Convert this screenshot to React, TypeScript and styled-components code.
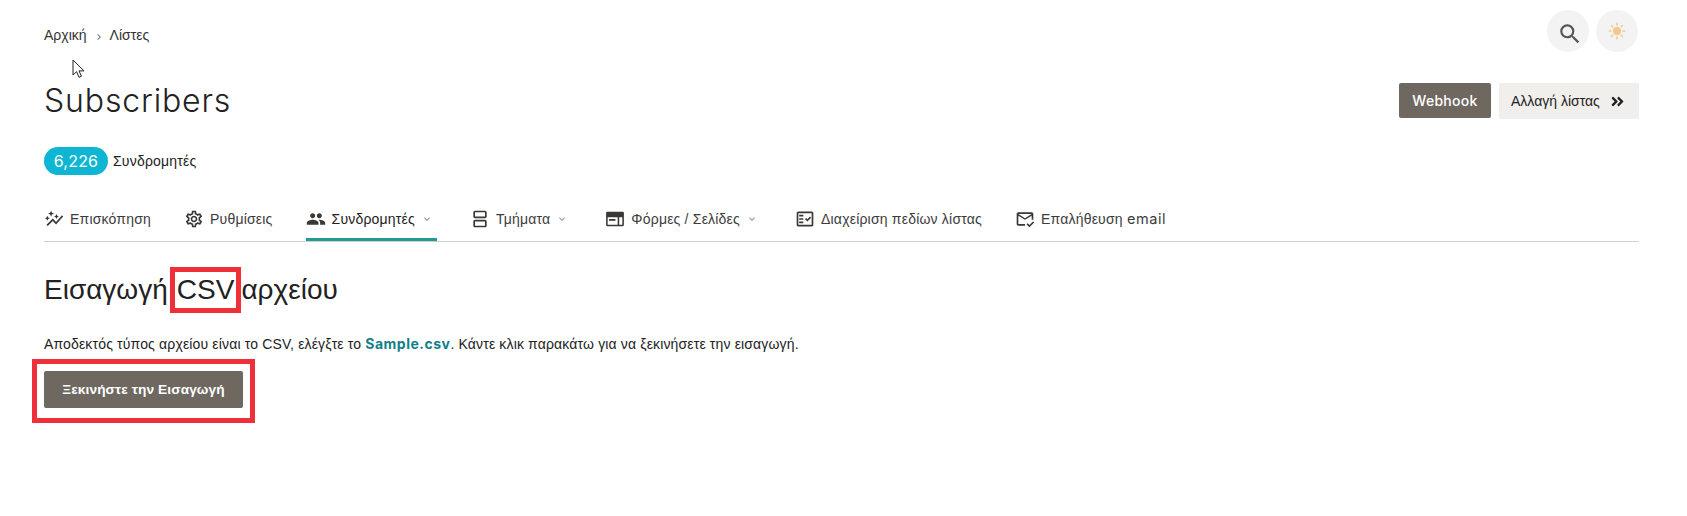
import React from "react";
import styled, { createGlobalStyle } from "styled-components";
import {
  MdOutlineAutoGraph,
  MdOutlineSettings,
  MdPeople,
  MdOutlineSplitscreen,
  MdOutlineFactCheck,
  MdOutlineMarkEmailRead,
  MdSearch,
  MdExpandMore,
  MdChevronRight,
} from "react-icons/md";
import { FaAngleDoubleRight } from "react-icons/fa";

const Global = createGlobalStyle`
  html, body { margin: 0; padding: 0; background: #fff; }
  body { font-family: "Liberation Sans", Arial, sans-serif; color: #222; }
`;

const Page = styled.div`
  position: relative;
  width: 1687px;
  height: 516px;
  box-sizing: border-box;
  padding: 10px 48px 0 44px;
  overflow: hidden;
`;

const TopRow = styled.div`
  display: flex;
  justify-content: space-between;
  align-items: center;
  height: 42px;
`;

const Crumbs = styled.nav`
  display: flex;
  align-items: center;
  font-size: 14px;
  color: #333;
  padding-top: 8px;
`;

const CrumbSep = styled.span`
  display: flex;
  align-items: center;
  margin: 3px 5px 0 6px;
  color: #777;
`;

const RoundGroup = styled.div`
  display: flex;
  gap: 7px;
  margin-right: 1px;
`;

const RoundButton = styled.button<{ $nudge?: boolean }>`
  width: 42px;
  height: 42px;
  border: 0;
  padding: ${(p) => (p.$nudge ? "5px 0 0 3px" : "0")};
  border-radius: 50%;
  background: #f3f3f3;
  color: #555;
  display: flex;
  align-items: center;
  justify-content: center;
`;

const TitleRow = styled.div`
  display: flex;
  justify-content: space-between;
  align-items: center;
  margin-top: 31px;
  height: 36px;
`;

const Title = styled.h1`
  margin: 0;
  font-family: "Inter", sans-serif;
  font-weight: 300;
  font-size: 32px;
  line-height: 36px;
  letter-spacing: 0.85px;
  color: #222;
`;

const Actions = styled.div`
  display: flex;
  gap: 8px;
`;

const DarkButton = styled.button`
  height: 35px;
  width: 92px;
  border: 0;
  border-radius: 2px;
  background: #6f6861;
  color: #fff;
  font-family: "Inter", sans-serif;
  font-weight: 500;
  font-size: 14px;
  letter-spacing: 0.3px;
  padding: 0;
`;

const LightButton = styled.button`
  height: 36px;
  width: 140px;
  border: 0;
  background: #f0efec;
  color: #222;
  font-family: "Liberation Sans", sans-serif;
  font-size: 14px;
  padding: 0 14px 0 12px;
  display: flex;
  align-items: center;
  justify-content: space-between;
`;

const CountRow = styled.div`
  display: flex;
  align-items: center;
  gap: 5px;
  margin-top: 28px;
  height: 28px;
  font-size: 14px;
  letter-spacing: 0.2px;
  color: #222;
`;

const Pill = styled.span`
  width: 64px;
  height: 28px;
  border-radius: 14px;
  background: #0fb6d3;
  color: #fff;
  display: flex;
  align-items: center;
  justify-content: center;
  font-family: "Inter", sans-serif;
  font-size: 16px;
`;

const Tabs = styled.div`
  display: flex;
  gap: 33px;
  margin-top: 21px;
  height: 45px;
  border-bottom: 1px solid #cfcfcf;
  box-sizing: content-box;
`;

const Tab = styled.div<{ $active?: boolean; $menu?: boolean }>`
  display: flex;
  align-items: center;
  gap: 6px;
  height: 45px;
  box-sizing: border-box;
  padding-top: 3px;
  padding-right: ${(p) => (p.$menu ? "4px" : "0")};
  border-bottom: 3px solid ${(p) => (p.$active ? "#1f9d94" : "transparent")};
  margin-bottom: -1px;
  font-size: 14px;
  letter-spacing: 0.2px;
  color: ${(p) => (p.$active ? "#222" : "#3c3c3c")};
  svg { color: #3a3735; flex: none; }
`;

const Caret = styled.span`
  display: flex;
  margin-left: 0;
  svg { color: #999; }
`;

const Latin = styled.span`
  font-family: "Inter", sans-serif;
  font-size: 14.5px;
  letter-spacing: 0.6px;
`;

const Heading = styled.h2`
  margin: 30px 0 0;
  font-weight: 400;
  font-size: 28px;
  line-height: 36px;
  color: #222;
  display: flex;
  align-items: center;
`;

const Marked = styled.span`
  display: inline-block;
  margin: 0 5px 0 7px;
  outline: 5px solid #ef3038;
  padding: 0 2px;
  line-height: 36px;
`;

const Text = styled.p`
  margin: 26px 0 0;
  font-size: 14px;
  line-height: 20px;
  letter-spacing: 0.15px;
  color: #222;
`;

const SampleLink = styled.a`
  font-family: "Inter", sans-serif;
  font-weight: 700;
  color: #127f87;
  text-decoration: none;
  letter-spacing: 0.5px;
`;

const StartFrame = styled.div`
  display: inline-block;
  margin: 5px 0 0 -12px;
  padding: 7px 7px 10px;
  border: 5px solid #ef3038;
`;

const StartButton = styled.button`
  display: block;
  width: 199px;
  height: 37px;
  border: 0;
  border-radius: 2px;
  background: #6f6861;
  color: #fff;
  font-family: "Liberation Sans", sans-serif;
  font-weight: 700;
  font-size: 13.7px;
  letter-spacing: 0.1px;
`;

const Cursor = styled.svg`
  position: absolute;
  left: 72px;
  top: 59px;
`;

const Sun = () => (
  <svg width="18" height="18" viewBox="0 0 20 20" fill="none">
    <circle cx="10" cy="10" r="4.6" fill="#efc98f" />
    <g stroke="#efc98f" strokeWidth="1.7" strokeLinecap="round">
      <path d="M10 1.5v1.8M10 16.7v1.8M1.5 10h1.8M16.7 10h1.8M4 4l1.2 1.2M14.8 14.8 16 16M4 16l1.2-1.2M14.8 5.2 16 4" />
    </g>
  </svg>
);

const FormsIcon = () => (
  <svg width="20" height="20" viewBox="0 0 18 18" fill="currentColor">
    <path fillRule="evenodd" d="M2 2.5h14a1 1 0 0 1 1 1v11a1 1 0 0 1-1 1H2a1 1 0 0 1-1-1v-11a1 1 0 0 1 1-1zM2.4 7.4v6.7h9V7.4h-9zM12.8 7.4v6.7h2.8V7.4h-2.8z" />
    <rect x="3.6" y="9" width="5.8" height="1.6" />
  </svg>
);

export default function App() {
  return (
    <Page>
      <Global />
      <TopRow>
        <Crumbs>
          Αρχική
          <CrumbSep>
            <MdChevronRight size={12} />
          </CrumbSep>
          Λίστες
        </Crumbs>
        <RoundGroup>
          <RoundButton $nudge aria-label="search">
            <MdSearch size={26} />
          </RoundButton>
          <RoundButton aria-label="theme">
            <Sun />
          </RoundButton>
        </RoundGroup>
      </TopRow>
      <TitleRow>
        <Title>Subscribers</Title>
        <Actions>
          <DarkButton>Webhook</DarkButton>
          <LightButton>
            Αλλαγή λίστας
            <FaAngleDoubleRight size={15} />
          </LightButton>
        </Actions>
      </TitleRow>
      <CountRow>
        <Pill>6,226</Pill>
        Συνδρομητές
      </CountRow>
      <Tabs>
        <Tab>
          <MdOutlineAutoGraph size={20} />
          Επισκόπηση
        </Tab>
        <Tab>
          <MdOutlineSettings size={20} />
          Ρυθμίσεις
        </Tab>
        <Tab $active $menu>
          <MdPeople size={20} />
          Συνδρομητές
          <Caret>
            <MdExpandMore size={12} />
          </Caret>
        </Tab>
        <Tab $menu>
          <MdOutlineSplitscreen size={20} />
          Τμήματα
          <Caret>
            <MdExpandMore size={12} />
          </Caret>
        </Tab>
        <Tab $menu>
          <FormsIcon />
          Φόρμες / Σελίδες
          <Caret>
            <MdExpandMore size={12} />
          </Caret>
        </Tab>
        <Tab>
          <MdOutlineFactCheck size={20} />
          Διαχείριση πεδίων λίστας
        </Tab>
        <Tab>
          <MdOutlineMarkEmailRead size={20} />
          <span>
            Επαλήθευση <Latin>email</Latin>
          </span>
        </Tab>
      </Tabs>
      <Heading>
        Εισαγωγή
        <Marked>CSV</Marked>
        αρχείου
      </Heading>
      <Text>
        Αποδεκτός τύπος αρχείου είναι το CSV, ελέγξτε το{" "}
        <SampleLink href="#">Sample.csv</SampleLink>. Κάντε κλικ παρακάτω για να ξεκινήσετε την εισαγωγή.
      </Text>
      <StartFrame>
        <StartButton>Ξεκινήστε την Εισαγωγή</StartButton>
      </StartFrame>
      <Cursor width="13" height="20" viewBox="0 0 13 20">
        <path d="M1 1v15l3.6-3.3 2.4 5.6 2.4-1-2.4-5.4H12z" fill="#fff" stroke="#222" strokeWidth="1" />
      </Cursor>
    </Page>
  );
}
